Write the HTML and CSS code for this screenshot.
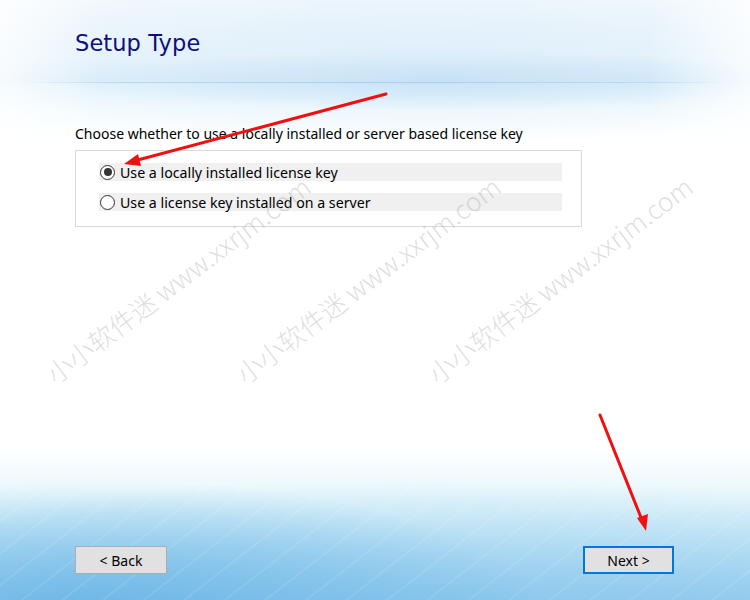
FILE: index.html
```html
<!DOCTYPE html>
<html>
<head>
<meta charset="utf-8">
<link rel="stylesheet" href="styles.css">
</head>
<body>
<div class="page">
  <header class="header">
    <h1 class="title">Setup Type</h1>
  </header>
  <div class="separator"></div>
  <main class="main">
    <p class="prompt">Choose whether to use a locally installed or server based license key</p>
    <div class="group">
      <label class="option"><span class="radio checked"></span><span class="label-text">Use a locally installed license key</span></label>
      <label class="option"><span class="radio"></span><span class="label-text">Use a license key installed on a server</span></label>
    </div>
  </main>
  <footer class="footer">
    <button class="btn">&lt; Back</button>
    <button class="btn btn-default">Next &gt;</button>
  </footer>

  <div class="watermark wm1">小小软件迷 www.xxrjm.com</div>
  <div class="watermark wm2">小小软件迷 www.xxrjm.com</div>
  <div class="watermark wm3">小小软件迷 www.xxrjm.com</div>

  <svg class="arrows" width="750" height="600" viewBox="0 0 750 600">
    <line x1="386" y1="94" x2="134" y2="161" stroke="#f01010" stroke-width="3" stroke-linecap="round"/>
    <polygon points="124,164 138,154 141,166" fill="#f01010"/>
    <line x1="600" y1="415" x2="642" y2="520" stroke="#f01010" stroke-width="3" stroke-linecap="round"/>
    <polygon points="646,531 637,518 648,514" fill="#f01010"/>
  </svg>
</div>
</body>
</html>
```
FILE: styles.css
```css
html, body {
  margin: 0;
  padding: 0;
}
body {
  width: 750px;
  height: 600px;
  overflow: hidden;
  font-family: "Noto Sans", "Open Sans", sans-serif;
}
.page {
  position: relative;
  width: 750px;
  height: 600px;
  display: flex;
  flex-direction: column;
  background:
    repeating-linear-gradient(-38deg, rgba(255,255,255,0) 0px, rgba(255,255,255,0) 22px, rgba(255,255,255,0.12) 23px, rgba(255,255,255,0) 25px),
    radial-gradient(ellipse 460px 130px at 90px 610px, rgba(95,175,228,0.7), rgba(95,175,228,0) 100%),
    radial-gradient(ellipse 900px 170px at 430px 650px, rgba(120,190,235,0.8), rgba(140,200,240,0) 100%),
    linear-gradient(to bottom, #ffffff 0px, #ffffff 450px, #eaf8fc 490px, #c8e8f6 545px, #a8d5f0 600px);
}
.page::before {
  content: "";
  position: absolute;
  left: 0;
  right: 0;
  top: 0;
  height: 140px;
  background:
    radial-gradient(ellipse 380px 30px at 440px 80px, rgba(190,221,244,0.7), rgba(200,228,248,0) 100%),
    radial-gradient(ellipse 480px 90px at 420px 55px, rgba(220,238,250,0.8), rgba(230,243,252,0) 100%),
    linear-gradient(to bottom, #f4f9fd 0px, #eaf4fc 55px, #dcedf9 80px, #e4f4fc 86px, #f4fbfe 110px, rgba(255,255,255,0) 140px);
  -webkit-mask-image: linear-gradient(to right, rgba(0,0,0,0.25) 0px, #000 100px, #000 650px, rgba(0,0,0,0.25) 750px);
  mask-image: linear-gradient(to right, rgba(0,0,0,0.25) 0px, #000 100px, #000 650px, rgba(0,0,0,0.25) 750px);
  z-index: 0;
}
.header, .separator, .main, .footer {
  position: relative;
  z-index: 1;
}
.header {
  height: 82px;
  padding-left: 75px;
  box-sizing: border-box;
}
.title {
  margin: 0;
  padding-top: 29px;
  font-family: "DejaVu Sans", Verdana, sans-serif;
  font-weight: normal;
  font-size: 22.5px;
  line-height: 28px;
  color: #10107a;
  letter-spacing: 0.1px;
}
.separator {
  height: 1px;
  margin: 0 20px;
  background: linear-gradient(to right, rgba(175,212,240,0), #b6d8f3 15%, #a8d0f2 50%, #b6d8f3 85%, rgba(175,212,240,0));
}
.main {
  padding-left: 75px;
  flex: 1;
}
.prompt {
  margin: 41px 0 0 0;
  font-size: 14px;
  line-height: 19px;
  color: #000;
}
.group {
  margin-top: 7px;
  width: 507px;
  height: 77px;
  border: 1px solid #d9d9d9;
  box-sizing: border-box;
  padding: 12px 0 0 23px;
  display: flex;
  flex-direction: column;
  gap: 12px;
}
.option {
  display: flex;
  align-items: center;
  gap: 5px;
  width: 463px;
  height: 18px;
  padding-left: 1px;
  box-sizing: border-box;
  background: #f0f0f0;
  font-size: 14.2px;
  color: #000;
}
.radio {
  width: 15px;
  height: 15px;
  border: 1px solid #333;
  border-radius: 50%;
  background: #fff;
  box-sizing: border-box;
  position: relative;
  flex: none;
}
.radio.checked::after {
  content: "";
  position: absolute;
  left: 2.5px;
  top: 2.5px;
  width: 8px;
  height: 8px;
  border-radius: 50%;
  background: #333;
}
.label-text {
  line-height: 18px;
  padding-top: 1px;
}
.footer {
  height: 54px;
  display: flex;
  justify-content: space-between;
  align-items: flex-start;
  padding: 0 75px 0 75px;
}
.btn {
  width: 92px;
  height: 28px;
  background: #e1e1e1;
  border: 1px solid #adadad;
  font-family: "Noto Sans", "Open Sans", sans-serif;
  font-size: 14px;
  color: #000;
  padding: 0;
}
.btn-default {
  width: 91px;
  border: 2px solid #0078d7;
  margin-right: 1px;
}
.watermark {
  position: absolute;
  z-index: 2;
  font-family: "Noto Sans CJK SC", "Noto Sans", sans-serif;
  font-weight: 300;
  font-size: 26px;
  line-height: 24px;
  white-space: nowrap;
  color: rgba(150,150,150,0.33);
  transform-origin: 0 100%;
  transform: rotate(-37deg);
  pointer-events: none;
}
.wm1 { left: 56px; top: 362px; }
.wm2 { left: 246px; top: 362px; }
.wm3 { left: 438px; top: 362px; }
.arrows {
  position: absolute;
  left: 0;
  top: 0;
  z-index: 3;
}
```
